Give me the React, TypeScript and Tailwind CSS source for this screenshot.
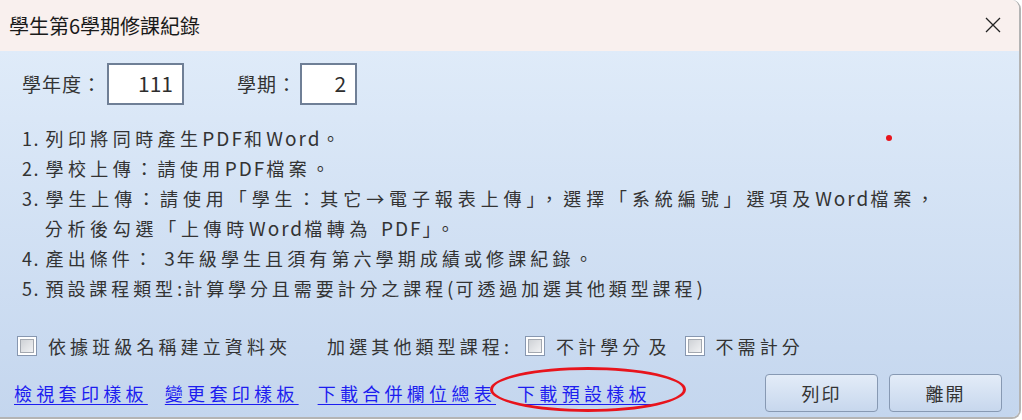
import React from "react";

const cjk = { fontFamily: '"Noto Sans CJK TC", "Noto Sans", sans-serif' };

// Latin runs are a touch larger with narrow tracking; CJK runs keep the wide spacing of the dialog
const Spaced: React.FC<{ text: string }> = ({ text }) => (
  <>
    {text.split(/([A-Za-z0-9.():]+)/).map((part, i) =>
      part === "" ? null : /^[A-Za-z0-9.():]+$/.test(part) ? (
        <span key={i} className="text-[19px] tracking-[2px]">
          {part}
        </span>
      ) : (
        <span key={i}>{part}</span>
      )
    )}
  </>
);

const Checkbox: React.FC = () => (
  <span className="inline-flex h-[20px] w-[20px] shrink-0 items-center justify-center border border-[#8797b0] bg-white">
    <span className="h-[14px] w-[14px] border border-[#a3a8b0] bg-gradient-to-br from-[#cfd2d6] to-[#f1f2f4]" />
  </span>
);

const lines: { no: string; text: string; track: string }[] = [
  { no: "1. ", text: "列印將同時產生PDF和Word。", track: "tracking-[4.4px]" },
  { no: "2. ", text: "學校上傳：請使用PDF檔案。", track: "tracking-[4.4px]" },
  {
    no: "3. ",
    text: "學生上傳：請使用「學生：其它→電子報表上傳」，選擇「系統編號」選項及Word檔案，",
    track: "tracking-[4.9px]",
  },
  { no: "", text: "　分析後勾選「上傳時Word檔轉為 PDF」。", track: "tracking-[4.7px]" },
  { no: "4. ", text: "產出條件： 3年級學生且須有第六學期成績或修課紀錄。", track: "tracking-[4.1px]" },
  { no: "5. ", text: "預設課程類型:計算學分且需要計分之課程(可透過加選其他類型課程)", track: "tracking-[3.9px]" },
];

export default function App() {
  return (
    <div className="h-[420px] w-[1022px] overflow-hidden bg-white" style={cjk}>
      <div className="flex h-[419px] w-[1021px] flex-col overflow-hidden rounded-tr-[9px] rounded-br-[9px] border-r-2 border-b-2 border-[#b4b4b4]">
        {/* Title bar */}
        <div className="flex h-[51px] shrink-0 items-center justify-between bg-[#f9f0ee] pl-[9px] pr-[17px]">
          <span className="text-[20px] text-[#1a1a1a]">學生第6學期修課紀錄</span>
          <svg width="18" height="18" viewBox="0 0 18 18" className="mb-[2px]">
            <path d="M2 2 L16 16 M16 2 L2 16" stroke="#222" strokeWidth="1.3" fill="none" />
          </svg>
        </div>

        {/* Body */}
        <div className="relative flex flex-1 flex-col bg-gradient-to-b from-[#dfebf9] to-[#c4d6ee] px-[22px] pt-[12px] text-[#333]">
          {/* year / term */}
          <div className="flex items-center text-[19px] tracking-[1px]">
            <span>學年度：</span>
            <div className="ml-[5px] flex h-[42px] w-[77px] items-center justify-end border-2 border-[#6f7f96] bg-white pr-[9px] text-[21px] tracking-normal text-[#2d2d2d]">
              111
            </div>
            <span className="ml-[53px]">學期：</span>
            <div className="ml-[3px] flex h-[42px] w-[57px] items-center justify-end border-2 border-[#6f7f96] bg-white pr-[9px] text-[21px] tracking-normal text-[#2d2d2d]">
              2
            </div>
          </div>

          {/* notes */}
          <div className="mt-[18px] text-[18px] leading-[29px] whitespace-pre">
            {lines.map((l, i) => (
              <div key={i} className={l.track}>
                {l.no && <span className="tracking-[1.5px]">{l.no}</span>}
                <Spaced text={l.text} />
              </div>
            ))}
          </div>

          {/* options */}
          <div className="-ml-[5px] mt-[31px] flex h-[24px] items-center text-[18px] tracking-[4.1px]">
            <Checkbox />
            <span className="ml-[11px]">依據班級名稱建立資料夾</span>
            <span className="ml-[36px]">
              加選其他類型課程<span className="tracking-[1px]">:</span>
            </span>
            <span className="ml-[15px] flex">
              <Checkbox />
            </span>
            <span className="ml-[11px]">
              不計學分<span className="tracking-normal"> </span>及
            </span>
            <span className="ml-[14px] flex">
              <Checkbox />
            </span>
            <span className="ml-[11px]">不需計分</span>
          </div>

          {/* links + buttons */}
          <div className="-ml-[8px] mt-[16px] flex items-center text-[18px] tracking-[4.3px]">
            <a className="text-[#1d1df0] underline underline-offset-[3px]">檢視套印樣板</a>
            <a className="ml-[17px] text-[#1d1df0] underline underline-offset-[3px]">變更套印樣板</a>
            <a className="ml-[19px] text-[#1d1df0] underline underline-offset-[3px]">下載合併欄位總表</a>
            <a className="relative ml-[21px] text-[#1d1df0] underline underline-offset-[3px]">
              下載預設樣板
              <span className="pointer-events-none absolute -left-[27px] -top-[13px] h-[45px] w-[196px] rounded-[50%] border-[3px] border-[#e8141c]" />
            </a>
            <button className="ml-auto flex h-[38px] w-[113px] items-center justify-center rounded-[4px] border border-[#8799b3] bg-gradient-to-b from-[#e3ecf8] to-[#c7d7ed] text-[18px] tracking-[2px] text-[#333]">
              列印
            </button>
            <button className="ml-[11px] mr-[-5px] flex h-[38px] w-[113px] items-center justify-center rounded-[4px] border border-[#8799b3] bg-gradient-to-b from-[#e3ecf8] to-[#c7d7ed] text-[18px] tracking-[2px] text-[#333]">
              離開
            </button>
          </div>

          {/* red marker dot */}
          <span className="absolute left-[886px] top-[84px] h-[6px] w-[6px] rounded-full bg-[#e8141c]" />
        </div>
      </div>
    </div>
  );
}
